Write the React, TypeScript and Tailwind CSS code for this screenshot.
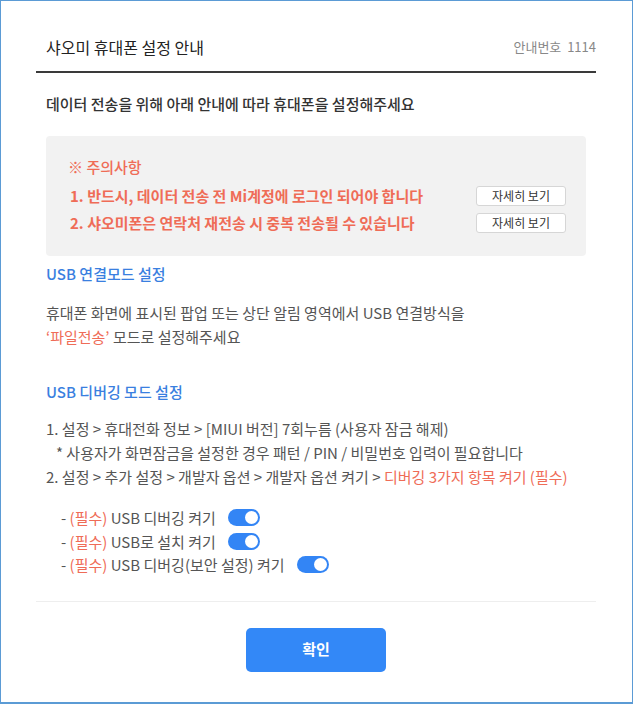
import React from "react";

const FONT = {
  fontFamily: '"Noto Sans CJK KR", "Noto Sans", sans-serif',
};

function Toggle() {
  return (
    <span className="inline-flex h-[17px] w-[32px] items-center justify-end rounded-full bg-[#3385f5] px-[2px] align-middle">
      <span className="h-[13px] w-[13px] rounded-full bg-white" />
    </span>
  );
}

const NOTICES = [
  "1. 반드시, 데이터 전송 전 Mi계정에 로그인 되어야 합니다",
  "2. 샤오미폰은 연락처 재전송 시 중복 전송될 수 있습니다",
];

const REQUIRED = [
  "USB 디버깅 켜기",
  "USB로 설치 켜기",
  "USB 디버깅(보안 설정) 켜기",
];

export default function App() {
  return (
    <div
      className="h-[704px] w-[633px] border border-b-2 border-[#5b9bd5] bg-white pl-[35px] pr-[36px] text-[#555]"
      style={FONT}
    >
      {/* header */}
      <div className="flex items-center justify-between border-b-2 border-[#3a3a3a] pb-[13px] pl-[10px] pt-[35px] leading-[22px]">
        <h1 className="text-[16px] text-[#222]">샤오미 휴대폰 설정 안내</h1>
        <span className="text-[13px] text-[#888]">안내번호&nbsp;&nbsp;1114</span>
      </div>

      <div className="px-[10px]">
        <p className="mt-[20px] text-[15px] font-medium leading-[22px] text-[#333]">
          데이터 전송을 위해 아래 안내에 따라 휴대폰을 설정해주세요
        </p>

        {/* notice box */}
        <div className="mt-[21px] rounded-[4px] bg-[#f2f2f2] pb-[23px] pl-[22px] pr-[20px] pt-[20px]">
          <p className="text-[15px] font-medium leading-[22px] text-[#ef6c57]">※ 주의사항</p>
          <div className="mt-[8px] flex flex-col gap-[7px]">
            {NOTICES.map((text) => (
              <div key={text} className="flex items-center justify-between pl-[2px]">
                <span className="text-[15px] font-bold leading-[20px] text-[#ef6c57]">{text}</span>
                <button className="h-[20px] w-[90px] rounded-[3px] border border-[#d6d6d6] bg-white text-[12px] leading-[18px] text-[#333]">
                  자세히 보기
                </button>
              </div>
            ))}
          </div>
        </div>

        {/* usb connection mode */}
        <h2 className="mt-[7px] text-[15px] font-medium leading-[22px] text-[#3a7fe0]">USB 연결모드 설정</h2>
        <div className="mt-[16px] text-[15px] leading-[24px]">
          <p>휴대폰 화면에 표시된 팝업 또는 상단 알림 영역에서 USB 연결방식을</p>
          <p>
            <span className="text-[#ef6c57]">‘파일전송’</span> 모드로 설정해주세요
          </p>
        </div>

        {/* usb debugging mode */}
        <h2 className="mt-[32px] text-[15px] font-medium leading-[22px] text-[#3a7fe0]">USB 디버깅 모드 설정</h2>
        <div className="mt-[14px] text-[15px] leading-[24px]">
          <p>1. 설정 &gt; 휴대전화 정보 &gt; [MIUI 버전] 7회누름 (사용자 잠금 해제)</p>
          <p className="pl-[10px]">* 사용자가 화면잠금을 설정한 경우 패턴 / PIN / 비밀번호 입력이 필요합니다</p>
          <p>
            2. 설정 &gt; 추가 설정 &gt; 개발자 옵션 &gt; 개발자 옵션 켜기 &gt;{" "}
            <span className="text-[#ef6c57]">디버깅 3가지 항목 켜기 (필수)</span>
          </p>
        </div>

        <div className="mt-[17px] flex flex-col pl-[15px] text-[15px] leading-[23.5px]">
          {REQUIRED.map((text) => (
            <div key={text} className="flex items-center gap-[12px]">
              <span>
                - <span className="text-[#ef6c57]">(필수)</span> {text}
              </span>
              <Toggle />
            </div>
          ))}
        </div>
      </div>

      <div className="mt-[24px] border-t border-[#eeeeee]" />

      <div className="mt-[26px] flex justify-center">
        <button className="h-[44px] w-[140px] rounded-[5px] bg-[#3388f7] text-[15px] font-bold text-white">
          확인
        </button>
      </div>
    </div>
  );
}
